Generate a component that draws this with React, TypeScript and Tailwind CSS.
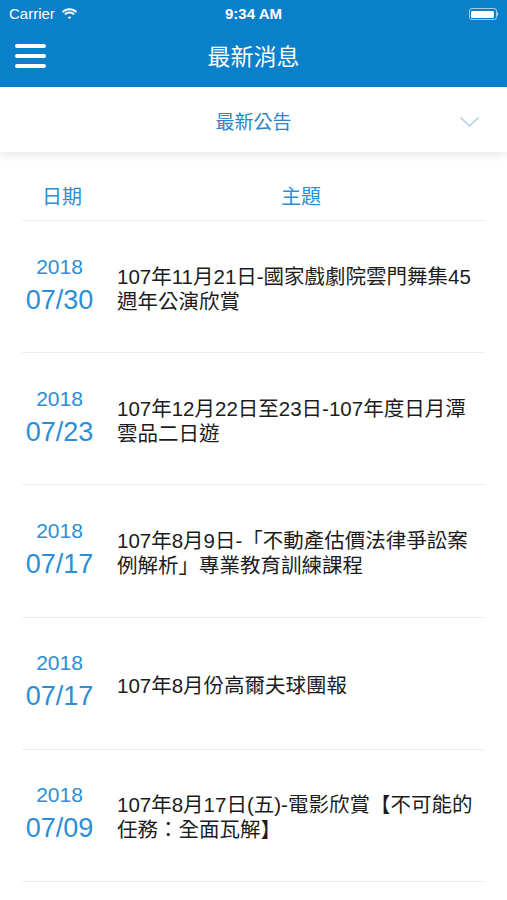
import React from "react";

interface NewsItem {
  year: string;
  date: string;
  title: string;
}

const items: NewsItem[] = [
  { year: "2018", date: "07/30", title: "107年11月21日-國家戲劇院雲門舞集45週年公演欣賞" },
  { year: "2018", date: "07/23", title: "107年12月22日至23日-107年度日月潭雲品二日遊" },
  { year: "2018", date: "07/17", title: "107年8月9日-「不動產估價法律爭訟案例解析」專業教育訓練課程" },
  { year: "2018", date: "07/17", title: "107年8月份高爾夫球團報" },
  { year: "2018", date: "07/09", title: "107年8月17日(五)-電影欣賞【不可能的任務：全面瓦解】" },
];

const font = { fontFamily: '"Liberation Sans", "Noto Sans CJK TC", sans-serif' };

function StatusBar() {
  return (
    <div className="h-[28px] flex items-center justify-between px-[9px] text-white">
      <div className="flex items-center gap-[6px] w-[120px]">
        <span className="text-[15px]">Carrier</span>
        <svg width="17" height="12" viewBox="0 0 17 12" fill="white">
          <path d="M8.5 2.2c2.4 0 4.6.9 6.3 2.5l1.3-1.3C14 1.3 11.4.2 8.5.2S3 1.3.9 3.4l1.3 1.3C3.9 3.1 6.1 2.2 8.5 2.2z" />
          <path d="M8.5 5.4c1.5 0 2.9.6 4 1.6l1.3-1.3C12.4 4.3 10.5 3.5 8.5 3.5s-3.9.8-5.3 2.2l1.3 1.3c1.1-1 2.5-1.6 4-1.6z" />
          <path d="M8.5 8.5c.7 0 1.3.3 1.8.7L8.5 11 6.7 9.2c.5-.4 1.1-.7 1.8-.7z" />
        </svg>
      </div>
      <span className="text-[15px] font-bold">9:34 AM</span>
      <div className="w-[120px] flex justify-end">
        <div className="flex items-center">
          <div className="w-[28px] h-[12px] rounded-[3px] border border-white/60 p-[1.5px]">
            <div className="w-full h-full rounded-[1.5px] bg-white" />
          </div>
          <div className="w-[1.5px] h-[4px] bg-white/60 rounded-r-sm" />
        </div>
      </div>
    </div>
  );
}

export default function App() {
  return (
    <div className="w-[507px] h-[900px] bg-white overflow-hidden" style={font}>
      <div className="bg-[#0a7fca]">
        <StatusBar />
        <div className="h-[59px] flex items-center relative">
          <div className="absolute left-[15px] top-[16px] flex flex-col gap-[6px]">
            <div className="w-[31px] h-[4px] rounded-full bg-white" />
            <div className="w-[31px] h-[4px] rounded-full bg-white" />
            <div className="w-[31px] h-[4px] rounded-full bg-white" />
          </div>
          <div className="flex-1 text-center text-white text-[23px] leading-none">最新消息</div>
        </div>
      </div>

      <div className="h-[65px] flex items-center relative bg-white shadow-[0_4px_8px_rgba(0,0,0,0.08)]">
        <div className="flex-1 text-center text-[#2a86c9] text-[19px] leading-none pt-[6px]">最新公告</div>
        <svg className="absolute right-[28px] top-[30px]" width="19" height="10" viewBox="0 0 19 10" fill="none">
          <path d="M1 1l8.5 8L18 1" stroke="#a9d1ef" strokeWidth="1.6" strokeLinecap="round" strokeLinejoin="round" />
        </svg>
      </div>

      <div className="mx-[22px]">
        <div className="h-[69px] pt-[33px] flex items-start border-b border-[#eeeeee] text-[#2a8fd6] text-[20px]">
          <div className="w-[80px] text-center leading-[24px]">日期</div>
          <div className="flex-1 pl-[15px] text-center leading-[24px]">主題</div>
        </div>
        {items.map((item, i) => (
          <div key={i} className="h-[132.2px] flex items-center border-b border-[#eeeeee]">
            <div className="w-[75px] flex flex-col items-center text-[#2a8fd6]">
              <span className="text-[21px] leading-[20px]">{item.year}</span>
              <span className="text-[27px] leading-[34px] mt-[6px]">{item.date}</span>
            </div>
            <div className="flex-1 pl-[20px] pr-[6px] text-[20.5px] leading-[25px] text-[#1c1c1c] mt-[4px]">
              {item.title}
            </div>
          </div>
        ))}
      </div>
    </div>
  );
}
